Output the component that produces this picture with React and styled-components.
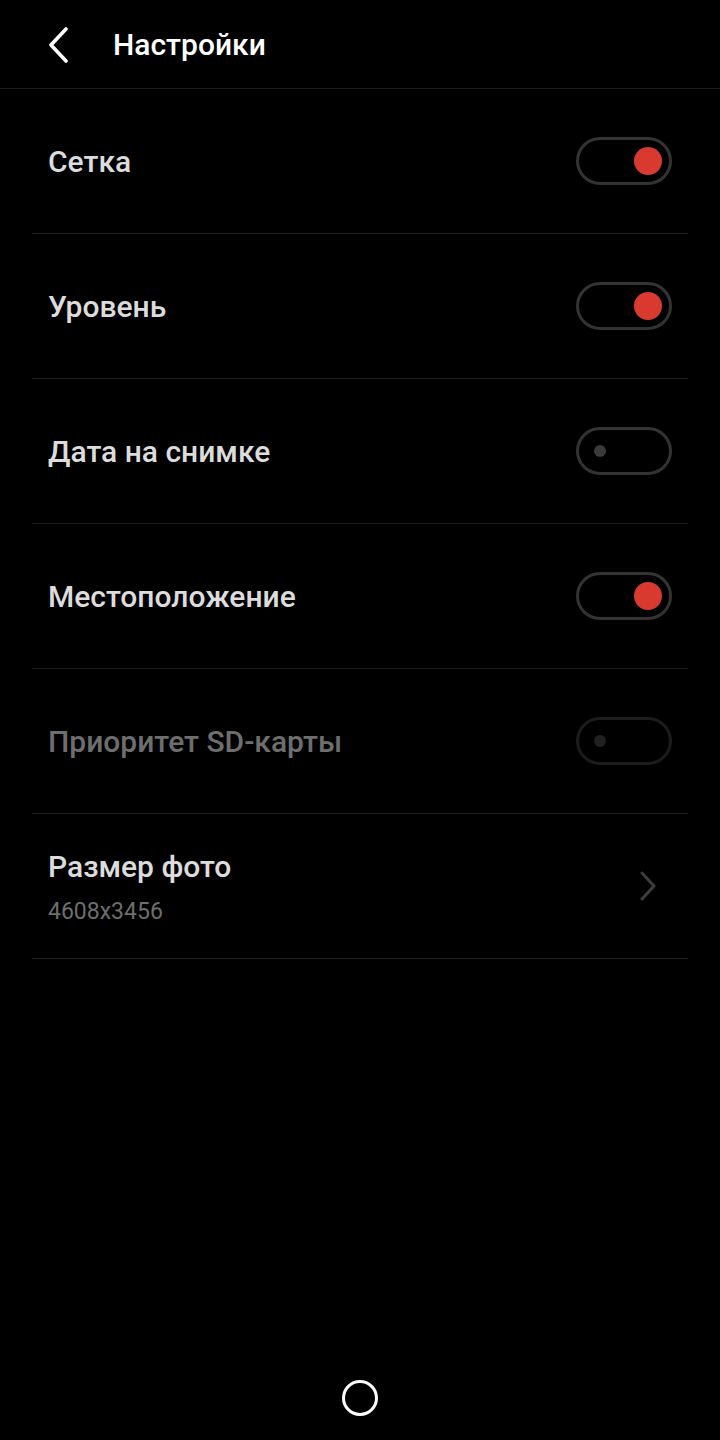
import React from 'react';
import styled, { createGlobalStyle } from 'styled-components';

const GlobalStyle = createGlobalStyle`
    html, body {
        margin: 0;
        padding: 0;
        background: #000;
    }
    * {
        box-sizing: border-box;
    }
`

const Page = styled.div`
    width: 720px;
    min-height: 1440px;
    background: #000;
    display: flex;
    flex-direction: column;
    font-family: Roboto, "Liberation Sans", sans-serif;
`

const Header = styled.header`
    height: 89px;
    display: flex;
    align-items: center;
    border-bottom: 1px solid #1c1c1c;
    padding-left: 44px;
    padding-top: 2px;
`

const BackButton = styled.button`
    width: 28px;
    height: 40px;
    padding: 0;
    border: none;
    background: none;
    display: flex;
    align-items: center;
    justify-content: center;
    margin-right: 41px;
`

const Title = styled.h1`
    margin: 0;
    font-size: 30px;
    font-weight: 500;
    color: #fff;
    line-height: 1;
`

const List = styled.div`
    margin: 0 32px;
    display: flex;
    flex-direction: column;
`

const Row = styled.div`
    height: 145px;
    display: flex;
    align-items: center;
    justify-content: space-between;
    padding: 0 16px;
    border-bottom: 1px solid #1f1f1f;
`

const TextBlock = styled.div`
    display: flex;
    flex-direction: column;
    gap: 18px;
    padding-top: 2px;
`

const Label = styled.span`
    font-size: 30px;
    font-weight: 500;
    line-height: 1;
    padding-top: ${p => (p.nudge ? '2px' : '0')};
    color: ${p => (p.disabled ? '#6e6e6e' : '#dcdcdc')};
`

const Sub = styled.span`
    font-size: 23px;
    line-height: 1;
    color: #6e6e6e;
`

const Track = styled.div`
    width: 96px;
    height: 48px;
    border-radius: 24px;
    border: 3px solid ${p => (p.disabled ? '#1c1c1c' : '#333')};
    display: flex;
    align-items: center;
    justify-content: ${p => (p.on ? 'flex-end' : 'flex-start')};
    padding: 0 ${p => (p.on ? '7px' : '15px')};
`

const Knob = styled.div`
    width: ${p => (p.on ? '28px' : '12px')};
    height: ${p => (p.on ? '28px' : '12px')};
    border-radius: 50%;
    background: ${p => (p.on ? '#d93a2f' : p.disabled ? '#222' : '#3a3a3a')};
`

const NavBar = styled.div`
    margin-top: auto;
    height: 84px;
    display: flex;
    justify-content: center;
    padding-top: 24px;
`

const HomeCircle = styled.div`
    width: 36px;
    height: 36px;
    border-radius: 50%;
    border: 3px solid #fff;
`

const Toggle = ({ on, disabled }) => (
    <Track on={on} disabled={disabled}>
        <Knob on={on} disabled={disabled} />
    </Track>
)

const settings = [
    { label: 'Сетка', on: true },
    { label: 'Уровень', on: true },
    { label: 'Дата на снимке', on: false },
    { label: 'Местоположение', on: true },
    { label: 'Приоритет SD-карты', on: false, disabled: true },
]

const App = () => (
    <Page>
        <GlobalStyle />
        <Header>
            <BackButton aria-label="Назад">
                <svg width="24" height="36" viewBox="0 0 24 36" fill="none">
                    <path d="M20 2 L5 18 L20 34" stroke="#fff" strokeWidth="3.6" strokeLinecap="round" strokeLinejoin="round" />
                </svg>
            </BackButton>
            <Title>Настройки</Title>
        </Header>
        <List>
            {settings.map(s => (
                <Row key={s.label}>
                    <Label nudge disabled={s.disabled}>{s.label}</Label>
                    <Toggle on={s.on} disabled={s.disabled} />
                </Row>
            ))}
            <Row>
                <TextBlock>
                    <Label>Размер фото</Label>
                    <Sub>4608x3456</Sub>
                </TextBlock>
                <svg width="20" height="30" viewBox="0 0 20 30" fill="none" style={{ marginRight: 14 }}>
                    <path d="M4 2 L16 15 L4 28" stroke="#3d3d3d" strokeWidth="3" strokeLinecap="round" strokeLinejoin="round" />
                </svg>
            </Row>
        </List>
        <NavBar>
            <HomeCircle />
        </NavBar>
    </Page>
)

export default App;
